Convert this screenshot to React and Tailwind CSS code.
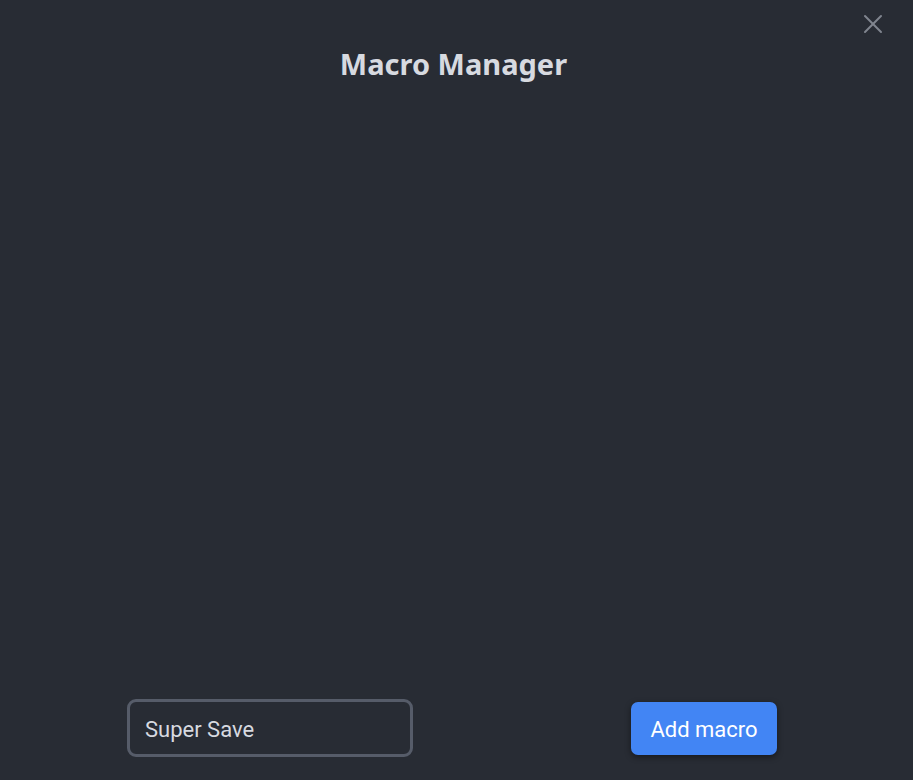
import React from 'react';
import { X } from 'lucide-react';

export default function App() {
    const [name, setName] = React.useState('Super Save');

    return (
        <div className="relative h-[780px] w-full bg-[#282c34] flex flex-col overflow-hidden">
            <button className="absolute top-[8px] right-[24px] text-[#80858f] hover:text-[#abb2bf]">
                <X className="w-[32px] h-[32px]" strokeWidth={1.5} />
            </button>

            <h1 className="pt-[44px] pr-[6px] text-center text-[29px] leading-[40px] font-bold text-[#d7dae0] font-['Noto_Sans',sans-serif]">
                Macro Manager
            </h1>

            <div className="flex-1" />

            <div className="flex items-center justify-between pl-[127px] pr-[136px] pb-[23px]">
                <input
                    value={name}
                    onChange={(e) => setName(e.target.value)}
                    autoFocus
                    className="w-[286px] h-[58px] rounded-[9px] border-[3px] border-[#565c69] bg-[#282c34] px-[15px] pt-[3px] text-[22px] text-[#d7dae0] font-['Roboto',sans-serif] outline-none caret-[#d7dae0]"
                />
                <button className="w-[146px] h-[53px] rounded-[7px] bg-[#4285f4] pt-[3px] text-white text-[22px] font-['Roboto',sans-serif] shadow-[0_2px_6px_rgba(0,0,0,0.45)] hover:bg-[#3b78e7]">
                    Add macro
                </button>
            </div>
        </div>
    );
}
